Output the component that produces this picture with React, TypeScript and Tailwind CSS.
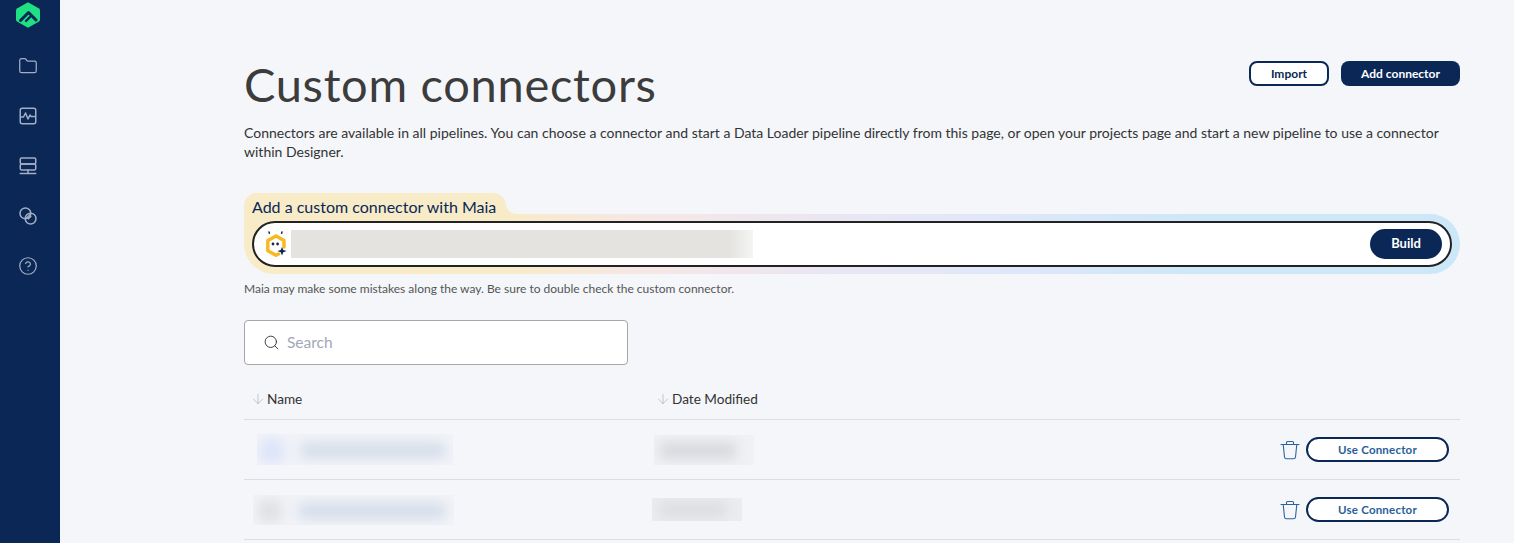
import { ArrowDown, CircleHelp, Folder, Search } from "lucide-react";

function Logo() {
    return (
        <svg width="26" height="28" viewBox="0 0 26 28" fill="none">
            <path d="M13 1.2 23.6 7.2Q25 8 25 9.6V18.4Q25 20 23.6 20.8L13 26.8 2.4 20.8Q1 20 1 18.4V9.6Q1 8 2.4 7.2Z" fill="#1fe184" />
            <path d="M5.5 19.5 13.5 11.5 21 19" stroke="#0a2756" strokeWidth="3" strokeLinecap="round" strokeLinejoin="round" />
            <path d="M11 20 15 16" stroke="#0a2756" strokeWidth="2.4" strokeLinecap="round" />
        </svg>
    );
}

function PulseSquare() {
    return (
        <svg width="18" height="18" viewBox="0 0 18 18" fill="none" stroke="#a3aec4" strokeWidth="1.5" strokeLinejoin="round" strokeLinecap="round">
            <rect x="1.25" y="1.25" width="15.5" height="15.5" rx="2" />
            <path d="M1.5 10h3l2-4 2.5 6 2-4 1 1.5h4" />
        </svg>
    );
}

function ServerStack() {
    return (
        <svg width="18" height="18" viewBox="0 0 18 18" fill="none" stroke="#a3aec4" strokeWidth="1.5" strokeLinejoin="round" strokeLinecap="round">
            <rect x="1.25" y="1" width="15.5" height="6" rx="1.5" />
            <rect x="1.25" y="7" width="15.5" height="6" rx="1.5" />
            <path d="M9 13v3.5M1.25 16.5h15.5" />
        </svg>
    );
}

function Overlap() {
    return (
        <svg width="18" height="18" viewBox="0 0 18 18" fill="none" stroke="#a3aec4" strokeWidth="1.5">
            <circle cx="6.4" cy="6.4" r="5.4" />
            <circle cx="11.6" cy="11.6" r="5.4" />
            <path d="M7 11.5 11.5 7M9 12.3 12.3 9" strokeWidth="1.3" />
        </svg>
    );
}

function MaiaIcon() {
    return (
        <svg width="24" height="30" viewBox="0 0 24 30" fill="none">
            <path d="M6 3 6.4 4.2M19 3 18.6 4.2" stroke="#1c2a44" strokeWidth="1.5" strokeLinecap="round" />
            <path d="M13 7 21 11.5v6.5M15.5 25 13 26.3 4.8 21.7V11.5L13 7" stroke="#f7b820" strokeWidth="3.4" strokeLinejoin="round" strokeLinecap="round" />
            <circle cx="10" cy="15" r="1.4" fill="#1c2a44" />
            <circle cx="14.6" cy="15" r="1.4" fill="#1c2a44" />
            <path d="M19 18 20.3 21l3.2 1-3.2 1.2L19 26.5l-1.3-3.3-3.2-1.2 3.2-1z" fill="#0a2756" />
        </svg>
    );
}

function TrashIcon() {
    return (
        <svg width="20" height="20" viewBox="0 0 20 20" fill="none" stroke="#2a64a0" strokeWidth="1.1" strokeLinejoin="round" strokeLinecap="round" className="mr-[6px]">
            <path d="M1 4.5h18" />
            <path d="M6.5 4.5V2.5q0-1 1-1h5q1 0 1 1v2" />
            <path d="M3.2 4.5 4.5 17q.2 1.8 2 1.8h7q1.8 0 2-1.8l1.3-12.5" />
        </svg>
    );
}

// blurred-out cell: soft blobs inside a clipped box
function Redacted({ className, children }: { className: string; children: React.ReactNode }) {
    return <div className={`overflow-hidden relative shrink-0 ${className}`}>{children}</div>;
}

function Row({ nameCell, dateCell, dateOffset }: { nameCell: React.ReactNode; dateCell: React.ReactNode; dateOffset: string }) {
    return (
        <div className="h-[60px] flex items-center border-b border-[#dcdee2]">
            <div className="w-[400px] shrink-0">{nameCell}</div>
            <div className={`flex-1 ${dateOffset}`}>{dateCell}</div>
            <TrashIcon />
            <button className="w-[143px] h-[25px] mr-[11px] rounded-full border-2 border-[#0a2756] bg-white text-[11.5px] font-bold text-[#2a5e98] tracking-[0.2px]">
                Use Connector
            </button>
        </div>
    );
}

export default function App() {
    return (
        <div className="flex h-[543px] overflow-hidden bg-[#f4f6fa] font-['Lato',sans-serif] text-[#333333]">
            <nav className="w-[60px] shrink-0 flex flex-col items-center bg-[#0a2756] pr-[4px]">
                <div className="h-[29px] pt-[1px] flex items-start">
                    <Logo />
                </div>
                <div className="mt-[28px] flex flex-col items-center gap-[32px] text-[#a3aec4]">
                    <Folder className="w-[18px] h-[18px] scale-110" strokeWidth={1.5} />
                    <PulseSquare />
                    <ServerStack />
                    <Overlap />
                    <CircleHelp className="w-[18px] h-[18px] scale-110" strokeWidth={1.5} />
                </div>
            </nav>

            <main className="flex-1 pl-[184px] pr-[54px]">
                <div className="flex justify-between items-start pt-[57px]">
                    <h1 className="text-[47px] leading-[54px] text-[#3c3c3c] tracking-[0.7px]">Custom connectors</h1>
                    <div className="flex gap-[12px] mt-[4px]">
                        <button className="w-[80px] h-[25px] rounded-[8px] border-2 border-[#0a2756] bg-white text-[12px] font-bold text-[#0a2756]">Import</button>
                        <button className="w-[119px] h-[25px] rounded-[8px] bg-[#0a2756] text-[12px] font-bold text-white">Add connector</button>
                    </div>
                </div>

                <p className="mt-[12px] text-[14px] leading-[19px] text-[#333333]">
                    Connectors are available in all pipelines. You can choose a connector and start a Data Loader pipeline directly from this page, or open your projects page and start a new pipeline to use a connector within Designer.
                </p>

                <div className="mt-[32px]">
                    <div className="relative w-[262px] h-[21px] rounded-t-[13px] bg-[#f8ebc8] pl-[8px] text-[16px] leading-[28px] text-[#0a2756]">
                        Add a custom connector with Maia
                        <div className="absolute left-full bottom-0 w-[10px] h-[10px] bg-[#f8ebc8]">
                            <div className="w-[10px] h-[10px] rounded-bl-[10px] bg-[#f4f6fa]" />
                        </div>
                    </div>
                    <div className="h-[60px] rounded-b-[30px] rounded-tr-[30px] px-[8px] py-[7px] bg-[linear-gradient(90deg,#f8ebc8_0%,#f8ebc8_22%,#f6e7e4_32%,#eae6f3_48%,#dfe7f9_62%,#cbe7f8_80%,#cbe7f8_100%)]">
                        <div className="h-[46px] rounded-full border-2 border-[#222222] bg-white flex items-center pl-[9px] pr-[8px]">
                            <MaiaIcon />
                            <Redacted className="ml-[4px] w-[462px] h-[28px] bg-[#e4e3e0]">
                                <div className="absolute right-0 top-0 h-full w-[24px] bg-gradient-to-r from-[#e4e3e0] to-[#f5f5f4]" />
                            </Redacted>
                            <button className="ml-auto w-[72px] h-[30px] rounded-full bg-[#0a2756] text-[13px] font-bold text-white">Build</button>
                        </div>
                    </div>
                </div>

                <p className="mt-[7px] text-[12px] leading-[15px] text-[#555555]">
                    Maia may make some mistakes along the way. Be sure to double check the custom connector.
                </p>

                <div className="mt-[24px] w-[384px] h-[45px] rounded-[4px] border border-[#a6a6a6] bg-white flex items-center pl-[18px]">
                    <Search className="w-[17px] h-[17px] text-[#333333]" strokeWidth={1.3} />
                    <span className="ml-[7px] text-[15.5px] text-[#a2a8b8]">Search</span>
                </div>

                <div className="mt-[13px] h-[42px] pt-[2px] flex items-center border-b border-[#dcdee2] text-[13.6px] text-[#333333]">
                    <div className="w-[405px] shrink-0 flex items-center pl-[6px]">
                        <ArrowDown className="w-[16px] h-[16px] mr-[1px] text-[#a9adb5]" strokeWidth={1} />
                        Name
                    </div>
                    <div className="flex items-center pl-[6px]">
                        <ArrowDown className="w-[16px] h-[16px] mr-[1px] text-[#a9adb5]" strokeWidth={1} />
                        Date Modified
                    </div>
                </div>

                <Row
                    dateOffset="pl-[10px]"
                    nameCell={
                        <Redacted className="ml-[13px] w-[196px] h-[31px] bg-[#f1f3f8]">
                            <div className="absolute left-[3px] top-[5px] w-[24px] h-[24px] rounded-[6px] bg-[#dce4fa] blur-[6px]" />
                            <div className="absolute left-[44px] top-[9px] w-[144px] h-[15px] bg-[#d5dde9] blur-[6px]" />
                        </Redacted>
                    }
                    dateCell={
                        <Redacted className="w-[100px] h-[30px] bg-[#f0f1f4]">
                            <div className="absolute left-[6px] top-[7px] w-[76px] h-[17px] bg-[#d9dade] blur-[6px]" />
                        </Redacted>
                    }
                />
                <Row
                    dateOffset="pl-[8px]"
                    nameCell={
                        <Redacted className="ml-[9px] w-[201px] h-[30px] bg-[#f1f3f7]">
                            <div className="absolute left-[6px] top-[5px] w-[22px] h-[22px] bg-[#dfe0e3] blur-[6px]" />
                            <div className="absolute left-[46px] top-[8px] w-[146px] h-[16px] bg-[#d5deeb] blur-[6px]" />
                        </Redacted>
                    }
                    dateCell={
                        <Redacted className="w-[90px] h-[23px] bg-[#ebecef]">
                            <div className="absolute left-[8px] top-[4px] w-[66px] h-[15px] bg-[#dcdde1] blur-[6px]" />
                        </Redacted>
                    }
                />
            </main>
        </div>
    );
}
